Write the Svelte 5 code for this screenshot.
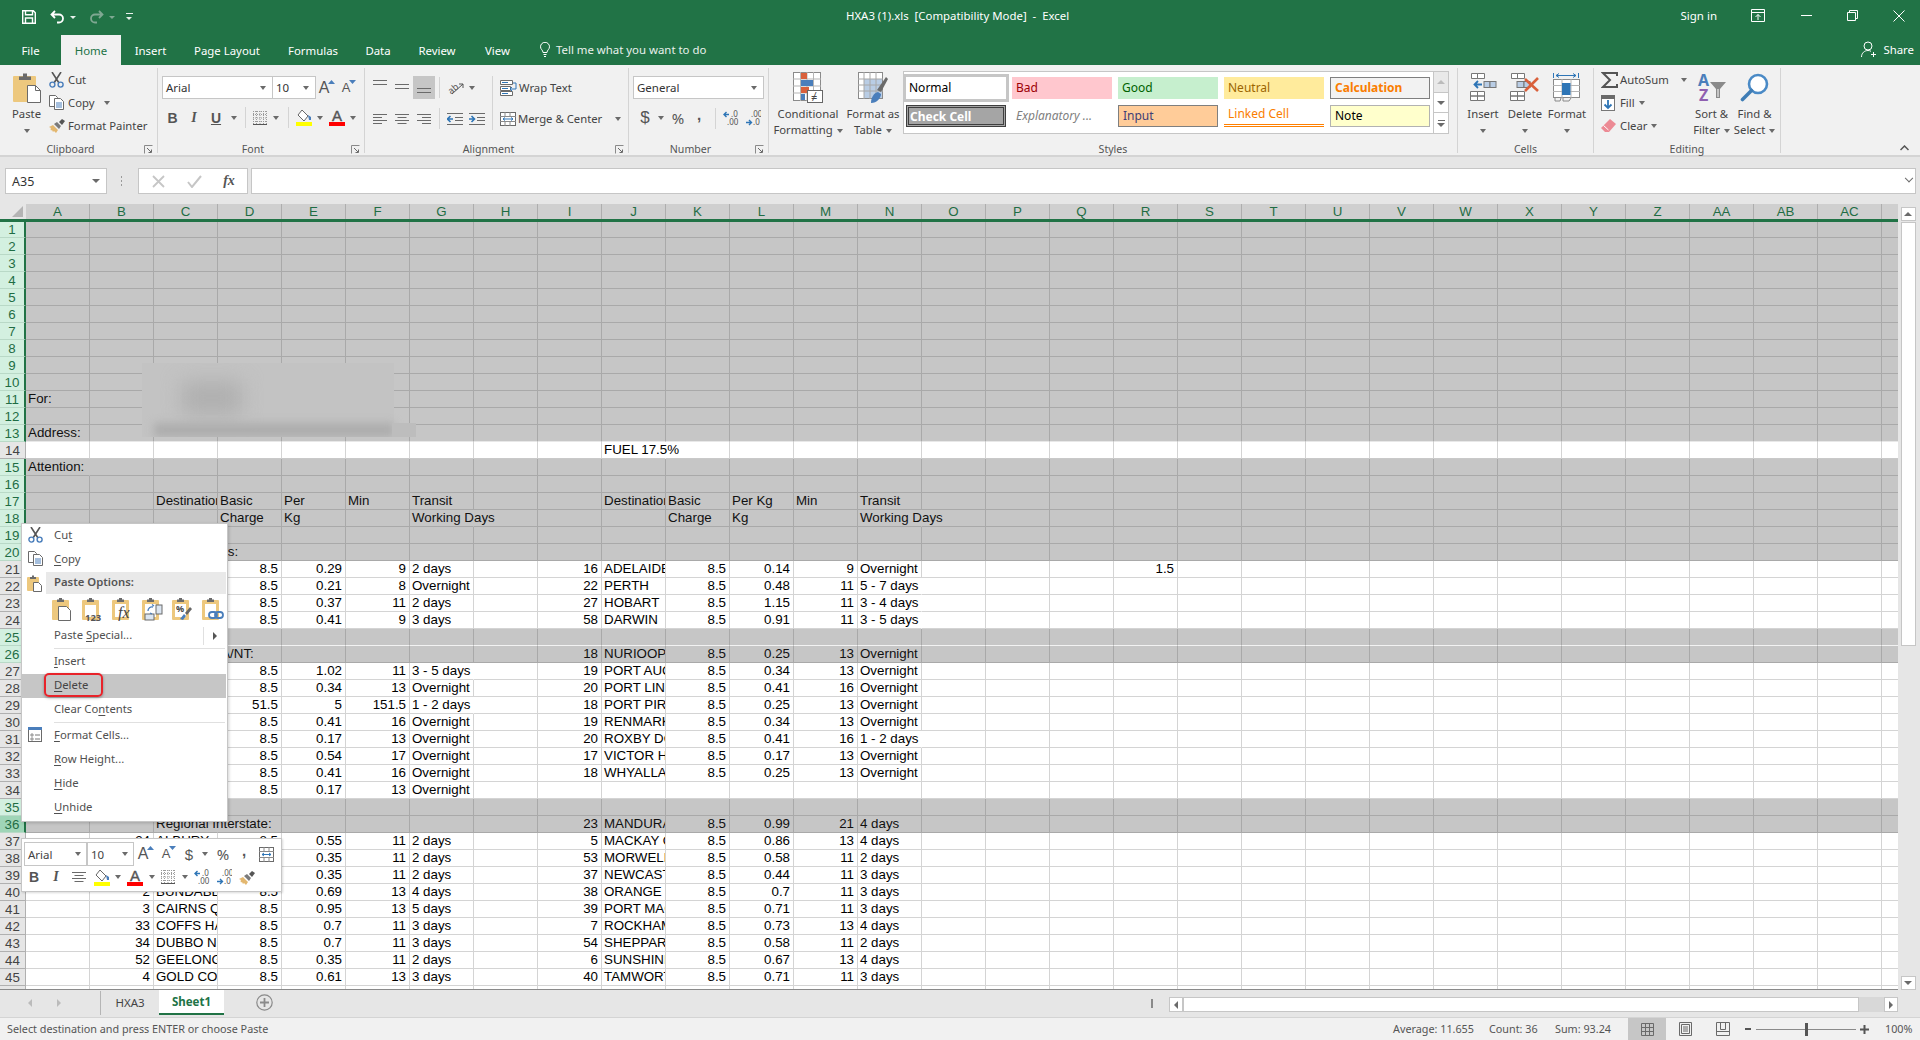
<script>
  const cols = [];
  for (let i = 0; i < 29; i++) {
    cols.push(i < 26 ? String.fromCharCode(65 + i) : 'A' + String.fromCharCode(65 + i - 26));
  }
  const line = (...v) => {
    const keys = ['B', 'C', 'D', 'E', 'F', 'G', 'I', 'J', 'K', 'L', 'M', 'N'];
    const o = {};
    keys.forEach((k, i) => { if (v[i] !== undefined && v[i] !== null) o[k] = v[i]; });
    return o;
  };
  const _ = null;
  const data = {
    11: { A: 'For:' }, 13: { A: 'Address:' }, 14: { J: 'FUEL 17.5%' }, 15: { A: 'Attention:' },
    17: { C: 'Destination', D: 'Basic', E: 'Per', F: 'Min', G: 'Transit', J: 'Destination', K: 'Basic', L: 'Per Kg', M: 'Min', N: 'Transit' },
    18: { D: 'Charge', E: 'Kg', G: 'Working Days', K: 'Charge', L: 'Kg', N: 'Working Days' },
    20: { C: 'Capital Cities:' },
    21: { ...line(_, _, 8.5, 0.29, 9, '2 days', 16, 'ADELAIDE', 8.5, 0.14, 9, 'Overnight'), R: 1.5 },
    22: line(_, _, 8.5, 0.21, 8, 'Overnight', 22, 'PERTH', 8.5, 0.48, 11, '5 - 7 days'),
    23: line(_, _, 8.5, 0.37, 11, '2 days', 27, 'HOBART', 8.5, 1.15, 11, '3 - 4 days'),
    24: line(_, _, 8.5, 0.41, 9, '3 days', 58, 'DARWIN', 8.5, 0.91, 11, '3 - 5 days'),
    26: line(_, 'Regional SA/NT:', _, _, _, _, 18, 'NURIOOPTA', 8.5, 0.25, 13, 'Overnight'),
    27: line(_, _, 8.5, 1.02, 11, '3 - 5 days', 19, 'PORT AUGUSTA', 8.5, 0.34, 13, 'Overnight'),
    28: line(_, _, 8.5, 0.34, 13, 'Overnight', 20, 'PORT LINCOLN', 8.5, 0.41, 16, 'Overnight'),
    29: line(_, _, 51.5, 5, 151.5, '1 - 2 days', 18, 'PORT PIRIE', 8.5, 0.25, 13, 'Overnight'),
    30: line(_, _, 8.5, 0.41, 16, 'Overnight', 19, 'RENMARK', 8.5, 0.34, 13, 'Overnight'),
    31: line(_, _, 8.5, 0.17, 13, 'Overnight', 20, 'ROXBY DOWNS', 8.5, 0.41, 16, '1 - 2 days'),
    32: line(_, _, 8.5, 0.54, 17, 'Overnight', 17, 'VICTOR HARBOR', 8.5, 0.17, 13, 'Overnight'),
    33: line(_, _, 8.5, 0.41, 16, 'Overnight', 18, 'WHYALLA', 8.5, 0.25, 13, 'Overnight'),
    34: line(_, _, 8.5, 0.17, 13, 'Overnight'),
    36: line(_, 'Regional Interstate:', _, _, _, _, 23, 'MANDURAH', 8.5, 0.99, 21, '4 days'),
    37: line(24, 'ALBURY', 8.5, 0.55, 11, '2 days', 5, 'MACKAY QLD', 8.5, 0.86, 13, '4 days'),
    38: line(43, 'BALLARAT', 8.5, 0.35, 11, '2 days', 53, 'MORWELL', 8.5, 0.58, 11, '2 days'),
    39: line(44, 'BENDIGO', 8.5, 0.35, 11, '2 days', 37, 'NEWCASTLE', 8.5, 0.44, 11, '3 days'),
    40: line(2, 'BUNDABERG', 8.5, 0.69, 13, '4 days', 38, 'ORANGE NSW', 8.5, 0.7, 11, '3 days'),
    41: line(3, 'CAIRNS QLD', 8.5, 0.95, 13, '5 days', 39, 'PORT MACQUARIE', 8.5, 0.71, 11, '3 days'),
    42: line(33, 'COFFS HARBOUR', 8.5, 0.7, 11, '3 days', 7, 'ROCKHAMPTON', 8.5, 0.73, 13, '4 days'),
    43: line(34, 'DUBBO NSW', 8.5, 0.7, 11, '3 days', 54, 'SHEPPARTON', 8.5, 0.58, 11, '2 days'),
    44: line(52, 'GEELONG VIC', 8.5, 0.35, 11, '2 days', 6, 'SUNSHINE COAST', 8.5, 0.67, 13, '4 days'),
    45: line(4, 'GOLD COAST', 8.5, 0.61, 13, '3 days', 40, 'TAMWORTH', 8.5, 0.71, 11, '3 days'),
    46: line(36, 'GOSFORD', 8.5, 0.44, 11, '2 days', 8, 'TOOWOOMBA', 8.5, 0.67, 13, '4 days')
  };
  const selected = new Set([1, 2, 3, 4, 5, 6, 7, 8, 9, 10, 11, 12, 13, 15, 16, 17, 18, 19, 20, 25, 26, 35, 36]);
  const rows = [];
  for (let n = 1; n <= 46; n++) {
    const d = data[n] || {};
    rows.push({
      n,
      sel: selected.has(n),
      active: n === 36,
      cells: cols.map((c, i) => {
        const v = d[c];
        const next = d[cols[i + 1]];
        const isText = typeof v === 'string';
        const width = isText ? v.length * 6.4 : 0;
        const spills = isText && next === undefined && width > 62;
        return { v, num: typeof v === 'number', clip: isText && next !== undefined, spills };
      })
    });
  }
  const menuA = [
    { t: ['Cu', 't', ''], icon: 'cut' },
    { t: ['', 'C', 'opy'], icon: 'copy' }
  ];
  const menuB = [
    { t: ['', 'I', 'nsert'] },
    { t: ['', 'D', 'elete'], hot: true },
    { t: ['Clear Co', 'n', 'tents'] }
  ];
  const menuC = [
    { t: ['', 'F', 'ormat Cells...'], icon: 'format' },
    { t: ['', 'R', 'ow Height...'] },
    { t: ['', 'H', 'ide'] },
    { t: ['', 'U', 'nhide'] }
  ];
  const pasteKinds = ['doc', '123', 'fx', 'swap', 'pct', 'link'];
  const tabs = ['File', 'Home', 'Insert', 'Page Layout', 'Formulas', 'Data', 'Review', 'View'];
</script>

{#snippet caret()}<span class="caret"></span>{/snippet}

{#snippet launcher()}
  <svg class="launcher" width="9" height="9" viewBox="0 0 9 9"><path d="M.5 8.5v-8h8" fill="none" stroke="#8a8a8a"/><path d="M3 3l4 4M4.5 7.5h3v-3" fill="none" stroke="#6a6a6a"/></svg>
{/snippet}

{#snippet cutIcon()}
  <svg width="15" height="16" viewBox="0 0 15 16"><path d="M3 0l7 11M12 0L5 11" stroke="#555" stroke-width="1.6" fill="none"/><circle cx="3.4" cy="12.6" r="2.5" fill="none" stroke="#4a7ebb" stroke-width="1.4"/><circle cx="11.6" cy="12.6" r="2.5" fill="none" stroke="#4a7ebb" stroke-width="1.4"/></svg>
{/snippet}
{#snippet copyIcon()}
  <svg width="15" height="15" viewBox="0 0 15 15"><path d="M.5.5h6l2 2v9h-8z" fill="#fff" stroke="#6a6a6a"/><path d="M5.5 3.5h6l3 3v8h-9z" fill="#fff" stroke="#6a6a6a"/><path d="M7 8h6M7 10h6M7 12h6" stroke="#4a7ebb"/></svg>
{/snippet}
{#snippet brushIcon()}
  <svg width="17" height="15" viewBox="0 0 17 15"><path d="M0 9l4-2 5 5-2 3-2-2-1 1-1-2-1 .5-.5-1.5L2 10z" fill="#e3b76f"/><path d="M5 6l5 5 2-3-4-4z" fill="#7a7a7a"/><path d="M10 4l3-3 3 2-3 4z" fill="#555"/></svg>
{/snippet}
{#snippet clip(kind)}
  <svg width="22" height="24" viewBox="0 0 22 24">
    <rect x="0" y="3" width="17" height="20" rx="1" fill="#edc87e"/>
    <path d="M5 5V2.500h2V1h3v1.500h2V5z" fill="#6a6a6a"/>
    {#if kind === 'doc'}
      <path d="M6.500 9.500h8l4 4v10h-12z" fill="#fff" stroke="#6a6a6a"/>
    {:else if kind === '123'}
      <rect x="3" y="8" width="11" height="12" fill="#fff"/><text x="3" y="23.500" font-size="9.500" font-weight="700" fill="#555" font-family="Noto Sans">123</text>
    {:else if kind === 'fx'}
      <rect x="3" y="7" width="11" height="13" fill="#fff"/><text x="6" y="21" font-size="16" font-style="italic" fill="#444" font-family="Liberation Serif">fx</text>
    {:else if kind === 'swap'}
      <rect x="3" y="7" width="11" height="13" fill="#fff"/><rect x="14" y="8" width="6" height="9" fill="#dce6f1" stroke="#6a6a6a"/><rect x="3" y="17" width="9" height="6" fill="#dce6f1" stroke="#6a6a6a"/><path d="M6 14a4 4 0 0 1 5-4M12 9l-2-1.500M8 16l2 1" stroke="#4a7ebb" fill="none" stroke-width="1.300"/>
    {:else if kind === 'pct'}
      <rect x="3" y="7" width="11" height="13" fill="#fff"/><text x="4" y="15" font-size="9" font-weight="700" fill="#444" font-family="Noto Sans">%</text><path d="M8 22l4-5 2 2-3 4z" fill="#4a7ebb"/><path d="M13 16l5-6 2 2-5 6z" fill="#666"/>
    {:else}
      <rect x="3" y="7" width="11" height="13" fill="#fff"/><rect x="7" y="15" width="8" height="6" rx="3" fill="none" stroke="#4a7ebb" stroke-width="1.800"/><rect x="13" y="15" width="8" height="6" rx="3" fill="none" stroke="#4a7ebb" stroke-width="1.800"/>
    {/if}
  </svg>
{/snippet}
{#snippet lines(kind)}
  <svg width="14" height="10" viewBox="0 0 14 10"><path d={kind === 'l' ? 'M0 .5h14M0 3.500h9M0 6.500h14M0 9.500h9' : kind === 'c' ? 'M0 .5h14M2.500 3.500h9M0 6.500h14M2.500 9.500h9' : kind === 'r' ? 'M0 .5h14M5 3.500h9M0 6.500h14M5 9.500h9' : 'M0 1.500h14M0 5.500h14'} stroke="#6a6a6a"/></svg>
{/snippet}
{#snippet borders()}
  <svg width="14" height="14" viewBox="0 0 14 14"><path d="M.5 0v13M3.500 0v13M7 0v13M10.500 0v13M13.500 0v13M0 .5h14M0 3.500h14M0 7h14M0 10.500h14" stroke="#9a9a9a" stroke-dasharray="1 1" fill="none"/><path d="M0 13.500h14" stroke="#555"/></svg>
{/snippet}
{#snippet fillIcon()}
  <svg width="17" height="17" viewBox="0 0 17 17"><path d="M6 1l6 6-4 5-6-6z" fill="#fff" stroke="#666"/><path d="M12 6l3 2v3h-2z" fill="#4a7ebb"/><rect x="0" y="13" width="16" height="4" fill="#ffff00"/></svg>
{/snippet}
{#snippet fontColor()}
  <span class="fcolor"><b>A</b><i></i></span>
{/snippet}
{#snippet incDec(up)}
  <svg width="16" height="16" viewBox="0 0 16 16">
    <path d={up ? 'M1 4.500h5M3.500 2L1 4.500 3.500 7' : 'M1 12.500h5M4 10l2.500 2.500L4 15'} fill="none" stroke="#2e75b6" stroke-width="1.400"/>
    <text x={up ? 8 : 6} y="7" font-size="8" font-family="Noto Sans" fill="#555">{up ? '.0' : '.00'}</text>
    <text x={up ? 4 : 8} y="15" font-size="8" font-family="Noto Sans" fill="#555">{up ? '.00' : '.0'}</text>
  </svg>
{/snippet}
{#snippet growA(up)}
  <span class="growa" class:small={!up}>A<svg width="7" height="4" viewBox="0 0 7 4"><path d={up ? 'M0 4l3.500-4L7 4z' : 'M0 0h7L3.500 4z'} fill="#4a7ebb"/></svg></span>
{/snippet}
{#snippet wrapTable()}
  <svg width="16" height="16" viewBox="0 0 16 16"><rect x=".5" y="1.500" width="15" height="13" fill="#fff" stroke="#6a6a6a"/><path d="M0 5.500h16M0 10.500h16M5 1v4M10 1v4M5 11v4M10 11v4" stroke="#8a8a8a"/><path d="M3 8h10M3 8l2-1.500M3 8l2 1.500M13 8l-2-1.500M13 8l-2 1.500" stroke="#2e75b6" fill="none"/></svg>
{/snippet}

<div class="app">
  <header class="titlebar">
    <div class="qat">
      <svg class="save" width="14" height="14" viewBox="0 0 14 14"><path d="M.7.7h10.600l2 2v10.600H.7z M3.500.7v4h7v-4M3.500 13.300V8h7v5.300" fill="none" stroke="#fff" stroke-width="1.400"/></svg>
      <svg class="undo" width="15" height="14" viewBox="0 0 15 14"><path d="M5 1L1.500 4.500 5 8M1.500 4.500H9a4 4 0 0 1 0 8H7" fill="none" stroke="#fff" stroke-width="1.800"/></svg>
      <span class="tcaret"></span>
      <svg class="redo" width="15" height="14" viewBox="0 0 15 14"><path d="M10 1l3.500 3.500L10 8M13.500 4.500H6a4 4 0 0 0 0 8h2" fill="none" stroke="#7fa892" stroke-width="1.800"/></svg>
      <span class="tcaret dim"></span>
      <span class="custom"></span>
    </div>
    <div class="doc">HXA3 (1).xls &nbsp;[Compatibility Mode] &nbsp;-&nbsp; Excel</div>
    <div class="winbtns">
      <span class="signin">Sign in</span>
      <svg class="rd" width="14" height="13" viewBox="0 0 14 13"><path d="M.5.5h13v12H.5zM.5 3.500h13M7 11V5.500M4.500 8L7 5.500 9.500 8" fill="none" stroke="#fff"/></svg>
      <svg class="mn" width="11" height="11" viewBox="0 0 11 11"><path d="M0 5.500h11" stroke="#fff"/></svg>
      <svg class="mx" width="11" height="11" viewBox="0 0 11 11"><path d="M.5 2.500h8v8h-8zM2.500 2.500v-2h8v8h-2" fill="none" stroke="#fff"/></svg>
      <svg class="cl" width="12" height="12" viewBox="0 0 12 12"><path d="M.5.5l11 11M11.500.5l-11 11" stroke="#fff"/></svg>
    </div>
  </header>

  <nav class="tabs">
    {#each tabs as t, i}
      <div class="tab t{i}" class:on={t === 'Home'}>{t}</div>
    {/each}
    <span></span>
    <svg class="bulb" width="10" height="15" viewBox="0 0 10 15"><path d="M3 10.500C3 8 .5 7.500.5 4.800a4.500 4.500 0 0 1 9 0C9.500 7.500 7 8 7 10.500zM3.500 12.500h3M4 14.500h2" fill="none" stroke="#fff"/></svg>
    <span class="tell">Tell me what you want to do</span>
    <span class="share">
      <svg width="16" height="17" viewBox="0 0 16 17"><circle cx="7" cy="5" r="4" fill="none" stroke="#fff"/><path d="M.5 16c0-4 3-6.500 6.500-6.500 1.200 0 2 .2 3 .8M12.500 11v5M10 13.500h5" fill="none" stroke="#fff"/></svg>
      Share
    </span>
  </nav>

  <section class="ribbon">
    <div class="group g1">
      <div class="body clipb">
        <div class="pastecol">
          <svg width="28" height="30" viewBox="0 0 28 30"><rect x="0" y="3" width="23" height="26" rx="1" fill="#edc87e"/><path d="M6 7V3.500h4V.5h4v3h4V7z" fill="#6a6a6a"/><path d="M14.500 12.500h8l5 5v12h-13z" fill="#fff" stroke="#6a6a6a"/><path d="M22.500 12.500v5h5" fill="none" stroke="#6a6a6a"/></svg>
          <span class="btxt">Paste</span>
          {@render caret()}
        </div>
        <div class="stack">
          <div class="sitem"><span class="sico">{@render cutIcon()}</span>Cut</div>
          <div class="sitem"><span class="sico">{@render copyIcon()}</span>Copy<span class="copycaret">{@render caret()}</span></div>
          <div class="sitem"><span class="sico">{@render brushIcon()}</span>Format Painter</div>
        </div>
      </div>
      <div class="glabel lab">Clipboard{@render launcher()}</div>
    </div>

    <div class="group g2">
      <div class="body fontg">
        <div class="frow1">
          <div class="combo fname">Arial{@render caret()}</div>
          <div class="combo fsize">10{@render caret()}</div>
          <span class="cc">{@render growA(true)}</span>
          <span class="cc">{@render growA(false)}</span>
        </div>
        <div class="frow2">
          <b class="ch bold">B</b>
          <i class="ch ital">I</i>
          <u class="ch bold">U</u>
          <span class="cc">{@render caret()}</span>
          <span class="vsep"></span>
          <span class="cc">{@render borders()}</span>
          <span class="cc">{@render caret()}</span>
          <span class="vsep"></span>
          <span class="cc">{@render fillIcon()}</span>
          <span class="cc">{@render caret()}</span>
          <span class="cc">{@render fontColor()}</span>
          <span class="cc">{@render caret()}</span>
        </div>
      </div>
      <div class="glabel lab">Font{@render launcher()}</div>
    </div>

    <div class="group g3">
      <div class="body aligng">
        <div class="agrid">
          <span class="cc top">{@render lines('t')}</span>
          <span class="cc">{@render lines('t')}</span>
          <span class="cc tile">{@render lines('b')}</span>
          <span class="vsep"></span>
          <span class="orient">
            <svg width="18" height="14" viewBox="0 0 18 14"><text x="1" y="11" font-size="9" font-family="Noto Sans" fill="#555" transform="rotate(-40 6 8)">ab</text><path d="M5 13L16 3M16 3h-4M16 3v4" stroke="#555" fill="none"/></svg>
            {@render caret()}
          </span>
          <span class="cc">{@render lines('l')}</span>
          <span class="cc">{@render lines('c')}</span>
          <span class="cc">{@render lines('r')}</span>
          <span class="vsep"></span>
          <span class="cc">
            <svg width="16" height="12" viewBox="0 0 16 12"><path d="M0 .5h16M8 4.500h8M8 7.500h8M0 11.500h16" stroke="#6a6a6a"/><path d="M0 6h6M3.500 3L.5 6l3 3" stroke="#2e75b6" stroke-width="1.600" fill="none"/></svg>
          </span>
          <span class="cc">
            <svg width="16" height="12" viewBox="0 0 16 12"><path d="M0 .5h16M8 4.500h8M8 7.500h8M0 11.500h16" stroke="#6a6a6a"/><path d="M6 6H0M2.500 3l3 3-3 3" stroke="#2e75b6" stroke-width="1.600" fill="none"/></svg>
          </span>
        </div>
        <span class="bigsep"></span>
        <div class="wrapcol">
          <div class="wrow">
            <svg width="17" height="16" viewBox="0 0 17 16"><path d="M.5.5h12v4H.5zM.5 6.500h10v4H.5zM.5 11.500h12v4H.5z" fill="#fff" stroke="#6a6a6a"/><path d="M2 2.500h6M2 8.500h6M2 13.500h6" stroke="#2e75b6"/><path d="M13 3h3v6h-6M12 7l-2 2 2 2" fill="none" stroke="#2e75b6"/></svg>
            <span>Wrap Text</span>
          </div>
          <div class="wrow">
            {@render wrapTable()}
            <span class="mtext">Merge &amp; Center</span>
            {@render caret()}
          </div>
        </div>
      </div>
      <div class="glabel lab">Alignment{@render launcher()}</div>
    </div>

    <div class="group g4">
      <div class="body numg">
        <div class="combo gen">General{@render caret()}</div>
        <div class="nrow">
          <span class="cc dollar">$</span>
          <span class="cc">{@render caret()}</span>
          <span class="cc pct">%</span>
          <span class="cc comma">,</span>
          <span class="cc"><span class="vsep"></span></span>
          <span class="cc">{@render incDec(true)}</span>
          <span></span>
          <span class="cc">{@render incDec(false)}</span>
        </div>
      </div>
      <div class="glabel lab">Number{@render launcher()}</div>
    </div>

    <div class="group g5">
      <div class="body stylesg">
        <div class="big b-cf">
          <span class="bico">
            <svg width="30" height="31" viewBox="0 0 30 31">
              <rect x=".5" y=".5" width="27" height="28" fill="#fff" stroke="#8a8a8a"/>
              <path d="M7.500 0v29M20.500 0v29M0 7h28M0 14h28M0 21h28M14 0v29" stroke="#b5b5b5"/>
              <rect x="8" y="1" width="6" height="6" fill="#d9603b"/><rect x="8" y="8" width="12" height="6" fill="#4a7ebb"/><rect x="8" y="15" width="8" height="6" fill="#d9603b"/><rect x="8" y="22" width="4" height="6" fill="#4a7ebb"/>
              <rect x="14.500" y="18.500" width="15" height="12" fill="#fff" stroke="#666"/>
              <text x="18" y="28.500" font-size="11" fill="#444" font-family="Noto Sans">≠</text>
            </svg>
          </span>
          <span class="btxt">Conditional</span>
          <span class="btxt">Formatting {@render caret()}</span>
        </div>
        <div class="big b-ft">
          <span class="bico">
            <svg width="30" height="31" viewBox="0 0 30 31">
              <rect x=".5" y=".5" width="24" height="26" fill="#fff" stroke="#8a8a8a"/>
              <rect x="6" y="7" width="18" height="19" fill="#b9cde5"/>
              <path d="M6 0v27M12 0v27M18 0v27M0 7h25M0 13h25M0 19h25" stroke="#a8a8a8"/>
              <path d="M19 18L28 5l2 2-7 13z" fill="#6a6a6a"/><path d="M13 31c0-6 3-10 7-11l3 2c0 4-4 9-10 9z" fill="#4a7ebb"/>
            </svg>
          </span>
          <span class="btxt">Format as</span>
          <span class="btxt">Table {@render caret()}</span>
        </div>
        <div class="gallery">
          <div class="sgrid">
            <div class="st normal">Normal</div>
            <div class="st bad">Bad</div>
            <div class="st good">Good</div>
            <div class="st neutral">Neutral</div>
            <div class="st calc">Calculation</div>
            <div class="st check">Check Cell</div>
            <div class="st expl">Explanatory ...</div>
            <div class="st input">Input</div>
            <div class="st linked">Linked Cell</div>
            <div class="st note">Note</div>
          </div>
          <div class="gscroll">
            <span class="gb disabled"><i class="upc"></i></span>
            <span class="gb"><i class="dnc"></i></span>
            <span class="gb more"><em></em><i class="dnc"></i></span>
          </div>
        </div>
      </div>
      <div class="glabel">Styles</div>
    </div>

    <div class="group g6">
      <div class="body cellsg">
        <div class="big w42">
          <span class="bico">
            <svg width="27" height="28" viewBox="0 0 27 28"><path d="M1.500.5h6v5h-6zM7.500.5h7v5h-7zM.5 18.500h7v4.500h-7zM7.500 18.500h7v4.500h-7zM.5 23h7v4.500h-7zM7.500 23h7v4.500h-7z" fill="#fff" stroke="#777"/><rect x="14" y="8.500" width="6" height="6" fill="#b9cde5" stroke="#777"/><rect x="20" y="8.500" width="6" height="6" fill="#b9cde5" stroke="#777"/><path d="M5 11.500h7M8 8L4.500 11.500 8 15" fill="none" stroke="#2e75b6" stroke-width="1.800"/></svg>
          </span>
          <span class="btxt">Insert</span>
          {@render caret()}
        </div>
        <div class="big w42">
          <span class="bico">
            <svg width="30" height="28" viewBox="0 0 30 28"><path d="M1.500.5h6v5h-6zM7.500.5h7v5h-7zM.5 18.500h7v4.500h-7zM7.500 18.500h7v4.500h-7zM.5 23h7v4.500h-7zM7.500 23h7v4.500h-7z" fill="#fff" stroke="#777"/><rect x="7" y="8.500" width="7" height="6" fill="#b9cde5" stroke="#777"/><rect x="14" y="8.500" width="6" height="6" fill="#b9cde5" stroke="#777"/><path d="M15 6l13 12M28 5L15 18" stroke="#d9603b" stroke-width="2.600"/></svg>
          </span>
          <span class="btxt">Delete</span>
          {@render caret()}
        </div>
        <div class="big w42">
          <span class="bico">
            <svg width="28" height="30" viewBox="0 0 28 30"><path d="M.5 1v5M25.500 1v5M3 3.500h20M3 3.500l3-2M3 3.500l3 2M23 3.500l-3-2M23 3.500l-3 2" fill="none" stroke="#2e75b6"/><rect x=".5" y="7.500" width="26" height="18" fill="#fff" stroke="#8a8a8a"/><path d="M9 7v19M18 7v19M0 13.500h27M0 19.500h27" stroke="#b5b5b5"/><rect x="9" y="11" width="8.500" height="12" fill="#2e75b6"/><path d="M2 26v3h5l1-3M10 26v3h6l2-3" fill="none" stroke="#8a8a8a"/></svg>
          </span>
          <span class="btxt">Format</span>
          {@render caret()}
        </div>
      </div>
      <div class="glabel">Cells</div>
    </div>

    <div class="group g7">
      <div class="body editg">
        <div class="estack">
          <div class="sitem"><span class="sico">
            <svg width="17" height="16" viewBox="0 0 17 16"><path d="M16 4V1H2l7 7-7 7h14v-3" fill="none" stroke="#555" stroke-width="2"/></svg>
          </span>AutoSum<span class="ascaret">{@render caret()}</span></div>
          <div class="sitem"><span class="sico">
            <svg width="14" height="16" viewBox="0 0 14 16"><rect x=".5" y=".5" width="13" height="15" fill="#fff" stroke="#777"/><rect x="0" y="0" width="14" height="4" fill="#6a6a6a"/><path d="M7 5v8M3.500 9.500L7 13l3.500-3.500" fill="none" stroke="#2e75b6" stroke-width="1.800"/></svg>
          </span>Fill <span class="mini">{@render caret()}</span></div>
          <div class="sitem"><span class="sico">
            <svg width="15" height="14" viewBox="0 0 15 14"><path d="M9 0l6 5-7 8H4L0 9z" fill="#ec8a94"/><path d="M2.500 6.500l5 4.500" stroke="#fff"/></svg>
          </span>Clear <span class="mini">{@render caret()}</span></div>
        </div>
        <div class="big w43">
          <span class="bico">
            <svg width="30" height="29" viewBox="0 0 30 29"><text x="1" y="13" font-size="16" font-weight="700" font-family="Noto Sans" fill="#4a7ebb">A</text><text x="2" y="28" font-size="16" font-weight="700" font-family="Noto Sans" fill="#8f5fb0">Z</text><path d="M13 9h16l-6 7v9h-4v-9z" fill="#8a8a8a"/><path d="M21 16v8" stroke="#fff"/></svg>
          </span>
          <span class="btxt">Sort &amp;</span>
          <span class="btxt">Filter {@render caret()}</span>
        </div>
        <div class="big w43">
          <span class="bico">
            <svg width="29" height="29" viewBox="0 0 29 29"><circle cx="18" cy="11" r="9" fill="#fff" stroke="#4a8ac6" stroke-width="2.600"/><path d="M11.500 17.500L2.500 26.500" stroke="#3f7db5" stroke-width="3.600" stroke-linecap="round"/></svg>
          </span>
          <span class="btxt">Find &amp;</span>
          <span class="btxt">Select {@render caret()}</span>
        </div>
      </div>
      <div class="glabel">Editing</div>
    </div>
    <div class="collapse">
      <svg width="9" height="6" viewBox="0 0 9 6"><path d="M.5 5l4-4 4 4" fill="none" stroke="#555" stroke-width="1.500"/></svg>
    </div>
  </section>

  <section class="fbar">
    <div class="namebox">A35<span class="nbcaret"></span></div>
    <div class="grip"></div>
    <div class="fxbox">
      <svg width="13" height="13" viewBox="0 0 13 13"><path d="M1 1l11 11M12 1L1 12" stroke="#c6c6c6" stroke-width="1.800"/></svg>
      <svg width="15" height="13" viewBox="0 0 15 13"><path d="M1 7l4 5L14 1" fill="none" stroke="#c6c6c6" stroke-width="2"/></svg>
      <span class="fx">fx</span>
    </div>
    <div class="finput"><span class="fcaret"></span></div>
  </section>

  <section class="sheet">
    <div class="gridpane">
      <div class="colhead">
        <div class="corner"><svg width="11" height="11" viewBox="0 0 11 11"><path d="M11 0v11H0z" fill="#b4b4b4"/></svg></div>
        {#each cols as c}<div class="ch-cell">{c}</div>{/each}
        <div class="ch-cell stub"></div>
      </div>
      <div class="gridrows">
        {#each rows as r}
          <div class="grow" class:sel={r.sel} class:e14={r.n === 13 || r.n === 14} class:e25={r.n === 25}>
            <div class="rh" class:rsel={r.sel} class:active={r.active}>{r.n}</div>
            {#each r.cells as c}
              <div class="cell" class:num={c.num} class:clip={c.clip} class:spill={c.spills}>{c.v ?? ''}</div>
            {/each}
            <div class="cell stub"></div>
          </div>
        {/each}
      </div>
    </div>
    <aside class="vs">
      <span class="sbtn"><i class="upc"></i></span>
      <div class="vtrack"><div class="vthumb"></div></div>
      <span class="sbtn"><i class="dnc"></i></span>
    </aside>
  </section>

  <section class="tabbar">
    <span class="nav"><i class="lc"></i></span>
    <span class="nav"><i class="rc"></i></span>
    <span class="tsep"></span>
    <span class="stab">HXA3</span>
    <span class="stab cur">Sheet1</span>
    <span class="addsheet"><svg width="17" height="17" viewBox="0 0 17 17"><circle cx="8.500" cy="8.500" r="7.700" fill="none" stroke="#8a8a8a" stroke-width="1.200"/><path d="M8.500 4v9M4 8.500h9" stroke="#8a8a8a" stroke-width="1.800"/></svg></span>
    <span class="dots"></span>
    <div class="hs">
      <span class="hbtn"><i class="lc"></i></span>
      <div class="hthumb"></div>
      <div class="htrack"></div>
      <span class="hbtn"><i class="rc"></i></span>
    </div>
  </section>

  <footer class="status">
    <span class="msg">Select destination and press ENTER or choose Paste</span>
    <span class="stat s-a">Average: 11.655</span>
    <span class="stat s-c">Count: 36</span>
    <span class="stat s-s">Sum: 93.24</span>
    <span class="vw on"><svg width="13" height="13" viewBox="0 0 13 13"><path d="M.5.5h12v12H.5zM4.500 0v13M8.500 0v13M0 4.500h13M0 8.500h13" fill="none" stroke="#6a6a6a"/></svg></span>
    <span class="vw"><svg width="13" height="14" viewBox="0 0 13 14"><path d="M.5.5h12v13H.5zM2.500 2.500h8v9h-8zM4 5h5M4 7h5M4 9h5" fill="none" stroke="#6a6a6a"/></svg></span>
    <span class="vw"><svg width="14" height="14" viewBox="0 0 14 14"><path d="M.5.5h13v13H.5zM4.500.5v7h5v-7M.5 9.500h13" fill="none" stroke="#6a6a6a"/></svg></span>
    <span class="zminus"></span>
    <div class="slider"><span class="knob"></span></div>
    <svg class="zplus" width="9" height="9" viewBox="0 0 9 9"><path d="M4.500 0v9M0 4.500h9" stroke="#555" stroke-width="2"/></svg>
    <span class="pcent">100%</span>
  </footer>

  <div class="blurpatch">
    <div class="b1"></div><div class="b2"></div><div class="b3"></div><div class="b4"></div>
  </div>

  <div class="ctx">
    {#each menuA as m}
      <div class="mi">
        <span class="mico">{#if m.icon === 'cut'}{@render cutIcon()}{:else}{@render copyIcon()}{/if}</span>
        <span>{m.t[0]}<u>{m.t[1]}</u>{m.t[2]}</span>
      </div>
    {/each}
    <div class="mhead">
      <span class="mico phead"><svg width="16" height="17" viewBox="0 0 16 17"><rect y="2" width="12" height="14" rx="1" fill="#edc87e"/><path d="M3 4V2h2V.5h2V2h2v2z" fill="#6a6a6a"/><path d="M6.500 7.500h5l3 3v6h-8z" fill="#fff" stroke="#6a6a6a"/></svg></span>
      <b>Paste Options:</b>
    </div>
    <div class="pastes">
      {#each pasteKinds as k}<span class="pk">{@render clip(k)}</span>{/each}
    </div>
    <div class="mi">
      <span class="mico"></span>
      <span>Paste <u>S</u>pecial...</span>
      <span class="submenu"><i class="rc"></i></span>
    </div>
    <div class="msep"></div>
    {#each menuB as m}
      <div class="mi" class:hotrow={m.hot}>
        <span class="mico"></span>
        <span>{m.t[0]}<u>{m.t[1]}</u>{m.t[2]}</span>
        {#if m.hot}<span class="redring"></span>{/if}
      </div>
    {/each}
    <div class="msep"></div>
    {#each menuC as m}
      <div class="mi">
        <span class="mico">{#if m.icon}<svg width="14" height="15" viewBox="0 0 14 15"><rect x=".5" y=".5" width="13" height="14" fill="#fff" stroke="#6a6a6a"/><rect width="14" height="3" fill="#4a7ebb"/><path d="M3 7h2v2H3zM3 11h2v2H3z" fill="none" stroke="#777" stroke-width=".8"/><path d="M7 8h5M7 12h5" stroke="#777"/></svg>{/if}</span>
        <span>{m.t[0]}<u>{m.t[1]}</u>{m.t[2]}</span>
      </div>
    {/each}
  </div>

  <div class="minibar">
    <div class="m1">
      <div class="mcombo mfn">Arial{@render caret()}</div>
      <div class="mcombo mfs">10{@render caret()}</div>
      <span class="cc">{@render growA(true)}</span>
      <span class="cc">{@render growA(false)}</span>
      <span class="cc dollar md">$</span>
      <span class="cc">{@render caret()}</span>
      <span class="cc pct md">%</span>
      <span class="cc comma">,</span>
      <span class="cc">
        <svg width="15" height="15" viewBox="0 0 15 15"><rect x=".5" y=".5" width="14" height="14" fill="#fff" stroke="#6a6a6a"/><path d="M0 4.500h15M0 10.500h15M5 0v4M10 0v4M5 11v4M10 11v4" stroke="#8a8a8a"/><path d="M3 7.500h9M3 7.500l2-1.500M3 7.500l2 1.500M12 7.500l-2-1.500M12 7.500l-2 1.500" stroke="#2e75b6" fill="none"/></svg>
      </span>
    </div>
    <div class="m2">
      <b class="ch bold">B</b>
      <i class="ch ital">I</i>
      <span class="cc">{@render lines('c')}</span>
      <span class="cc">{@render fillIcon()}</span>
      <span class="cc">{@render caret()}</span>
      <span class="cc">{@render fontColor()}</span>
      <span class="cc">{@render caret()}</span>
      <span class="cc">{@render borders()}</span>
      <span class="cc">{@render caret()}</span>
      <span class="cc">{@render incDec(true)}</span>
      <span class="cc">{@render incDec(false)}</span>
      <span class="cc">{@render brushIcon()}</span>
    </div>
  </div>
</div>

<style>
  :global(body) { margin: 0; overflow: hidden; background: #e6e6e6; }
  .app {
    position: relative;
    width: 1920px;
    height: 1040px;
    overflow: hidden;
    display: flex;
    flex-direction: column;
    font-family: "Noto Sans", "Open Sans", sans-serif;
    font-size: 11.3px;
    color: #444;
    background: #e6e6e6;
  }
  svg { display: block; flex: none; }
  .cc { display: flex; align-items: center; justify-content: center; }
  .caret {
    display: inline-block;
    width: 0; height: 0;
    border-left: 3.500px solid transparent;
    border-right: 3.500px solid transparent;
    border-top: 4px solid #6a6a6a;
    vertical-align: middle;
  }

  /* title */
  .titlebar {
    height: 35px;
    background: #217346;
    color: #fff;
    display: grid;
    grid-template-columns: 846px 1fr auto;
    align-items: center;
    flex: none;
  }
  .qat { display: flex; align-items: center; padding-left: 22px; margin-top: -1px; }
  .undo { margin-left: 14px; }
  .redo { margin-left: 13px; }
  .tcaret { width: 0; height: 0; border-left: 3px solid transparent; border-right: 3px solid transparent; border-top: 3.500px solid #e8f1ec; margin-left: 5px; }
  .tcaret.dim { border-top-color: #7fa892; margin-left: 5px; }
  .custom { width: 7px; height: 7px; margin-left: 11px; border-top: 1px solid #e8f1ec; position: relative; }
  .custom::after { content: ""; position: absolute; top: 3px; left: 0; border-left: 3.500px solid transparent; border-right: 3.500px solid transparent; border-top: 3.500px solid #e8f1ec; }
  .doc { font-size: 11.4px; margin-top: -4px; white-space: nowrap; }
  .winbtns { display: flex; align-items: center; margin-top: -4px; padding-right: 15px; }
  .signin { font-size: 11.5px; margin-right: 34px; }
  .mn { margin-left: 36px; }
  .mx { margin-left: 35px; }
  .cl { margin-left: 35px; }

  /* tabs */
  .tabs {
    height: 30px;
    background: #217346;
    color: #fff;
    display: grid;
    grid-template-columns: 61px 60px 59px 94px 78px 52px 66px 55px 15px 10px auto 1fr;
    align-items: stretch;
    flex: none;
    font-size: 11.4px;
  }
  .tab { display: flex; align-items: center; justify-content: center; padding-top: 0; }
  .tab.on { background: #f1f1f1; color: #217346; }
  .bulb { align-self: center; margin-top: -1px; }
  .tell { align-self: center; padding-left: 6px; color: #e9f1ec; margin-top: -1px; }
  .share { align-self: center; justify-self: end; display: flex; align-items: center; gap: 6px; padding-right: 6px; margin-top: -2px; }

  /* ribbon */
  .ribbon {
    height: 92px;
    flex: none;
    background: #f1f1f1;
    display: flex;
    box-sizing: border-box;
    border-bottom: 2px solid #d4d4d4;
    position: relative;
  }
  .group {
    margin-top: 3px;
    height: 85px;
    box-sizing: border-box;
    border-right: 1px solid #d4d4d4;
    display: flex;
    flex-direction: column;
    flex: none;
  }
  .body { height: 69px; flex: none; }
  .glabel { position: relative; height: 16px; line-height: 24px; text-align: center; font-size: 10.6px; color: #555; }
  .glabel.lab { padding-right: 16px; box-sizing: border-box; }
  .launcher { position: absolute; right: 4px; top: 8px; }
  .g1 { width: 158px; }
  .g2 { width: 207px; }
  .g3 { width: 264px; }
  .g4 { width: 140px; }
  .g5 { width: 689px; }
  .g6 { width: 136px; }
  .g7 { width: 187px; }
  .btxt { line-height: 16px; white-space: nowrap; height: 16px; }

  .clipb { display: flex; }
  .pastecol { width: 50px; display: flex; flex-direction: column; align-items: center; padding: 5px 0 0 3px; box-sizing: border-box; }
  .pastecol .btxt { margin-top: 3px; }
  .pastecol .caret { margin-top: 7px; }
  .stack { display: flex; flex-direction: column; margin-left: -1px; }
  .sitem { height: 23px; display: flex; align-items: center; white-space: nowrap; }
  .sico { width: 19px; display: flex; justify-content: flex-start; }
  .copycaret { margin-left: 10px; display: flex; }

  .fontg { padding: 8px 0 0 4px; box-sizing: border-box; }
  .frow1 { display: grid; grid-template-columns: 111px 43px 22px 22px; height: 23px; }
  .combo {
    box-sizing: border-box;
    border: 1px solid #c6c6c6;
    background: #fff;
    display: flex;
    align-items: center;
    justify-content: space-between;
    padding: 0 6px 0 3px;
    font-size: 11.5px;
    color: #333;
  }
  .fsize { border-left-width: 0; margin-left: 0; }
  .frow2 {
    margin-top: 7px;
    display: grid;
    grid-template-columns: 21px 22px 22px 13px 10px 20px 12px 12px 20px 12px 22px 10px;
    height: 23px;
  }
  .frow2 > * { display: flex; align-items: center; justify-content: center; }
  .ch { font-family: "Liberation Sans", sans-serif; color: #555; display: flex; align-items: center; justify-content: center; font-size: 14px; }
  .bold { font-weight: 700; }
  .ital { font-family: "Liberation Serif", serif; font-weight: 700; font-style: italic; }
  .vsep { width: 1px; height: 21px; background: #d4d4d4; justify-self: center; align-self: center; display: block !important; }
  .fcolor { display: flex; flex-direction: column; align-items: center; width: 16px; }
  .fcolor b { font-family: "Liberation Sans", sans-serif; font-size: 15px; line-height: 13px; font-weight: 400; color: #555; -webkit-text-stroke: .4px #555; }
  .fcolor i { display: block; width: 16px; height: 4px; background: #ff0000; }
  .growa { position: relative; font-family: "Liberation Sans", sans-serif; font-size: 16px; color: #555; display: inline-flex; line-height: 16px; }
  .growa.small { font-size: 13px; }
  .growa svg { margin-left: -1px; margin-top: 0; }

  .aligng { display: flex; padding: 8px 0 0 4px; box-sizing: border-box; }
  .agrid { display: grid; grid-template-columns: 22px 22px 22px 9px 22px 22px; grid-template-rows: 23px 23px; row-gap: 8px; }
  .agrid .top { padding-bottom: 7px; }
  .agrid .cc:nth-child(2) { padding-top: 1px; }
  .tile { background: #c6c6c6; padding-top: 8px; }
  .orient { grid-column: span 2; display: flex; align-items: center; gap: 4px; padding-left: 3px; }
  .bigsep { width: 1px; height: 54px; background: #d4d4d4; margin-left: 4px; }
  .wrapcol { display: flex; flex-direction: column; gap: 8px; padding-left: 7px; }
  .wrow { height: 23px; display: flex; align-items: center; gap: 2px; white-space: nowrap; }
  .mtext { margin-right: 11px; }

  .numg { padding: 8px 0 0 4px; box-sizing: border-box; }
  .gen { width: 131px; height: 23px; padding-left: 3px; }
  .nrow { margin-top: 7px; display: grid; grid-template-columns: 24px 8px 26px 16px 16px 16px 6px 16px; height: 23px; }
  .dollar { font-family: "Liberation Sans", sans-serif; font-size: 17px; color: #555; }
  .pct { font-family: "Noto Sans", sans-serif; font-size: 15px; color: #555; }
  .comma { font-family: "Liberation Sans", sans-serif; font-weight: 700; font-size: 15px; color: #555; padding-bottom: 7px; box-sizing: border-box; }
  .md { font-size: 15px; }

  .stylesg { display: flex; }
  .big { display: flex; flex-direction: column; align-items: center; flex: none; }
  .bico { height: 38px; display: flex; align-items: center; justify-content: center; flex: none; }
  .b-cf { width: 78px; }
  .b-ft { width: 52px; }
  .w42 { width: 42px; }
  .w43 { width: 43px; }
  .big > .caret { margin-top: 7px; }
  .big .btxt > .caret { margin-left: 1px; border-top-color: #6a6a6a; }
  .gallery { margin: 3px 0 0 4px; width: 546px; height: 63px; box-sizing: border-box; border: 1px solid #c6c6c6; background: #fff; display: flex; }
  .sgrid { display: grid; grid-template-columns: repeat(5, 100px); grid-template-rows: 22px 22px; gap: 6px; padding: 5px 0 0 2px; width: 531px; box-sizing: border-box; }
  .st { display: flex; align-items: center; padding: 0 0 2px 4px; box-sizing: border-box; font-size: 12px; white-space: nowrap; }
  .normal { color: #000; outline: 3px solid #c6c6c6; outline-offset: 0; padding-left: 3px; }
  .bad { background: #ffc7ce; color: #9c0006; }
  .good { background: #c6efce; color: #006100; }
  .neutral { background: #ffeb9c; color: #9c6500; }
  .calc { background: #f2f2f2; color: #fa7d00; border: 1px solid #7f7f7f; font-weight: 700; }
  .check { background: #a5a5a5; color: #fff; font-weight: 700; border: 3px double #3f3f3f; padding: 0 0 0 1px; }
  .expl { color: #7f7f7f; font-style: italic; }
  .input { background: #ffcc99; color: #3f3f76; border: 1px solid #7f7f7f; }
  .linked { color: #fa7d00; border-bottom: 3px double #ff8001; }
  .note { background: #ffffcc; color: #000; border: 1px solid #b2b2b2; }
  .gscroll { width: 14px; border-left: 1px solid #c6c6c6; display: flex; flex-direction: column; margin-left: auto; }
  .gb { flex: 1; display: flex; flex-direction: column; gap: 2px; align-items: center; justify-content: center; border-bottom: 1px solid #c6c6c6; background: #fff; }
  .gb.disabled { background: #e9e9e9; }
  .gb:last-child { border-bottom: 0; }
  .gb.disabled .upc { border-bottom-color: #bbb; }
  .gb em { display: block; width: 7px; height: 1px; background: #6a6a6a; }
  .upc, .dnc, .lc, .rc { display: block; width: 0; height: 0; }
  .upc { border-left: 4px solid transparent; border-right: 4px solid transparent; border-bottom: 4px solid #6a6a6a; }
  .dnc { border-left: 4px solid transparent; border-right: 4px solid transparent; border-top: 4px solid #6a6a6a; }
  .lc { border-top: 4px solid transparent; border-bottom: 4px solid transparent; border-right: 4px solid #bbb; }
  .rc { border-top: 4px solid transparent; border-bottom: 4px solid transparent; border-left: 4px solid #bbb; }

  .cellsg { display: flex; padding-left: 4px; box-sizing: border-box; }
  .editg { display: flex; padding-left: 7px; box-sizing: border-box; }
  .estack { width: 89px; flex: none; }
  .estack .sitem { position: relative; }
  .ascaret { margin-left: 12px; display: flex; }
  .mini { display: inline-flex; margin-left: 4px; }
  .collapse { flex: 1; display: flex; align-items: flex-end; justify-content: flex-end; padding: 0 11px 4px 0; }

  /* formula bar */
  .fbar { height: 47px; flex: none; background: #e6e6e6; display: flex; padding-top: 11px; box-sizing: border-box; align-items: flex-start; }
  .namebox { width: 102px; height: 26px; margin-left: 5px; box-sizing: border-box; border: 1px solid #c6c6c6; background: #fff; display: flex; align-items: center; justify-content: space-between; padding: 0 6px 0 6px; font-size: 12.5px; color: #333; }
  .nbcaret { border-left: 4px solid transparent; border-right: 4px solid transparent; border-top: 4px solid #6a6a6a; }
  .grip { width: 3px; height: 11px; margin: 7px 15px 0 13px; background-image: radial-gradient(#9a9a9a 1px, transparent 1px); background-size: 3px 4px; }
  .fxbox { width: 110px; height: 26px; box-sizing: border-box; border: 1px solid #c6c6c6; background: #fff; display: grid; grid-template-columns: 38px 34px 36px; align-items: center; justify-items: center; }
  .fx { font-family: "Liberation Serif", serif; font-style: italic; font-size: 14px; font-weight: 700; color: #555; }
  .finput { width: 1665px; height: 26px; margin-left: 3px; box-sizing: border-box; border: 1px solid #c6c6c6; background: #fff; display: flex; align-items: center; justify-content: flex-end; padding-right: 3px; }
  .fcaret { width: 5px; height: 5px; border-right: 1.500px solid #6a6a6a; border-bottom: 1.500px solid #6a6a6a; transform: rotate(45deg) translate(-2px,-2px); }

  /* sheet */
  .sheet { height: 786px; flex: none; display: flex; }
  .gridpane { width: 1898px; flex: none; display: flex; flex-direction: column; border-bottom: 1px solid #8a8a8a; box-sizing: border-box; overflow: hidden; }
  .colhead { display: flex; height: 16px; flex: none; border-bottom: 3px solid #217346; box-sizing: content-box; font-family: "Liberation Sans", sans-serif; margin-bottom: -3px; position: relative; z-index: 1; margin-top: -1px; }
  .corner { width: 26px; height: 16px; flex: none; background: #e6e6e6; display: flex; align-items: flex-end; justify-content: flex-end; padding: 0 3px 2px 0; box-sizing: border-box; }
  .ch-cell { width: 64px; flex: none; height: 16px; line-height: 18px; box-sizing: border-box; background: #cfcfcf; border-right: 1px solid #aeaeae; text-align: center; font-size: 13.3px; color: #1f6d44; }
  .ch-cell.stub { width: 16px; border-right: 0; }
  .gridrows { flex: 1; overflow: hidden; background: #fff; padding-top: 2px; }
  .grow { display: flex; height: 17px; box-sizing: border-box; font-family: "Liberation Sans", sans-serif; font-size: 13.33px; color: #000; }
  .grow.sel { background: #c6c6c6; color: #111; }
  .rh { width: 26px; flex: none; height: 17px; line-height: 17px; box-sizing: border-box; background: #e6e6e6; border-right: 1px solid #b0b0b0; border-bottom: 1px solid #b0b0b0; text-align: center; font-size: 13.33px; color: #444; }
  .rh.rsel { background: #d3f0e0; color: #1f6d44; border-right: 2px solid #217346; border-bottom-color: #b9d9c7; }
  .rh.active { background: #9fd5b7; }
  .cell { width: 64px; flex: none; height: 17px; box-sizing: border-box; border-right: 1px solid #d4d4d4; border-bottom: 1px solid #d4d4d4; line-height: 16px; padding: 0 3px 0 2px; white-space: nowrap; }
  .sel .cell { border-color: #a9a9a9; }
  .e14 .cell { border-bottom: 1px solid #c9c9c9; }
  .sel.e14 .cell { border-bottom: 1px solid #e8e8e8; }
  .sel.e25 .cell { border-bottom: 1px solid #f2f2f2; }
  .cell.stub { width: 16px; border-right: 0; }
  .cell.num { text-align: right; }
  .cell.clip { overflow: hidden; padding-right: 0; }
  .cell.spill { border-right-color: transparent !important; }
  .vs { flex: 1; display: flex; flex-direction: column; align-items: center; background: #e6e6e6; padding: 3px 3px 0 1px; box-sizing: border-box; }
  .sbtn { width: 15px; height: 14px; background: #fff; border: 1px solid #c6c6c6; box-sizing: border-box; display: flex; align-items: center; justify-content: center; flex: none; }
  .vtrack { flex: 1; width: 15px; }
  .vthumb { height: 424px; margin-top: 1px; background: #fff; border: 1px solid #c6c6c6; box-sizing: border-box; }

  /* tab bar */
  .tabbar { height: 28px; flex: none; background: #e6e6e6; display: flex; align-items: flex-start; border-bottom: 1px solid #d4d4d4; box-sizing: border-box; position: relative; }
  .nav { width: 29px; height: 26px; display: flex; align-items: center; justify-content: center; }
  .nav:first-child { margin-left: 15px; }
  .tsep { width: 1px; height: 24px; background: #b5b5b5; margin: 1px 0 0 27px; }
  .stab { width: 58px; height: 25px; display: flex; align-items: center; justify-content: center; font-size: 11.5px; color: #444; }
  .stab.cur { width: 65px; background: #fff; color: #217346; font-weight: 700; border-bottom: 2px solid #217346; box-sizing: content-box; height: 23px; }
  .addsheet { margin: 4px 0 0 32px; }
  .dots { width: 2px; height: 9px; margin: 9px 0 0 878px; background-image: radial-gradient(#8a8a8a 1px, transparent 1px); background-size: 2px 3px; }
  .hs { display: flex; margin: 7px 0 0 16px; height: 15px; width: 729px; }
  .hbtn { width: 14px; height: 15px; background: #fff; border: 1px solid #c6c6c6; box-sizing: border-box; display: flex; align-items: center; justify-content: center; flex: none; }
  .hbtn .rc, .hbtn .lc { border-left-color: #6a6a6a; border-right-color: #6a6a6a; }
  .hthumb { width: 676px; background: #fff; border: 1px solid #c6c6c6; box-sizing: border-box; }
  .htrack { width: 25px; background: #d8d8d8; }

  /* status */
  .status { height: 22px; flex: none; background: #f1f1f1; display: flex; align-items: center; font-size: 10.8px; color: #555; }
  .msg { margin-left: 7px; width: 1386px; flex: none; padding-bottom: 2px; }
  .stat { flex: none; padding-bottom: 2px; }
  .s-a { width: 96px; }
  .s-c { width: 66px; }
  .s-s { width: 73px; }
  .vw { width: 38px; height: 22px; display: flex; align-items: center; justify-content: center; flex: none; }
  .vw.on { background: #c6c6c6; }
  .zminus { width: 6px; height: 2px; background: #555; margin-left: 3px; }
  .slider { width: 100px; height: 1px; background: #8a8a8a; margin-left: 5px; position: relative; }
  .knob { position: absolute; left: 49px; top: -6px; width: 3px; height: 13px; background: #555; }
  .zplus { margin-left: 4px; }
  .pcent { margin-left: 16px; padding-bottom: 2px; }

  /* blur */
  .blurpatch { position: absolute; left: 142px; top: 363px; width: 274px; height: 74px; overflow: hidden; }
  .b1 { position: absolute; left: 0; top: 0; width: 252px; height: 74px; background: #c3c3c3; }
  .b2 { position: absolute; left: 40px; top: 18px; width: 60px; height: 34px; background: #b0b0b0; filter: blur(10px); }
  .b3 { position: absolute; left: 12px; top: 60px; width: 240px; height: 14px; background: #adadad; filter: blur(4px); }
  .b4 { position: absolute; left: 250px; top: 60px; width: 24px; height: 14px; background: #bdbdbd; }

  /* context menu */
  .ctx { position: absolute; left: 21px; top: 523px; width: 207px; height: 299px; box-sizing: border-box; background: #fff; border: 1px solid #c6c6c6; box-shadow: 1px 1px 3px rgba(0,0,0,.18); font-size: 11.3px; color: #505050; }
  .mi { display: flex; align-items: center; height: 24px; position: relative; box-sizing: border-box; padding-bottom: 3px; }
  .mico { width: 26px; margin-right: 6px; flex: none; display: flex; justify-content: center; }
  .mi u { text-underline-offset: 2px; }
  .mhead { display: flex; align-items: center; height: 22px; position: relative; }
  .mhead b { background: #e9e9e9; flex: 1; height: 22px; line-height: 20px; margin: 0 1px 0 -8px; padding-left: 8px; color: #555; font-weight: 600; }
  .pastes { display: grid; grid-template-columns: repeat(6, 30px); height: 30px; padding: 3px 0 0 30px; box-sizing: border-box; }
  .msep { height: 1px; background: #e0e0e0; margin: 0 2px 1px 32px; }
  .submenu { position: absolute; left: 181px; top: 3px; height: 18px; width: 18px; border-left: 1px solid #e0e0e0; display: flex; align-items: center; justify-content: center; padding-left: 5px; box-sizing: border-box; }
  .submenu .rc { border-left-color: #555; }
  .hotrow { background: #c6c6c6; margin-right: 1px; color: #444; }
  .redring { position: absolute; left: 22px; top: -1px; width: 59px; height: 24px; box-sizing: border-box; border: 2px solid #e8232a; border-radius: 5px; box-shadow: 0 1px 3px rgba(0,0,0,.35); }

  /* mini toolbar */
  .minibar { position: absolute; left: 21px; top: 838px; width: 261px; height: 54px; box-sizing: border-box; background: #fff; border: 1px solid #c6c6c6; box-shadow: 1px 1px 2px rgba(0,0,0,.15); padding: 3px 0 0 2px; }
  .m1 { display: grid; grid-template-columns: 63px 47px 24px 22px 18px 14px 22px 20px 24px; height: 23px; font-size: 11.5px; }
  .mcombo { box-sizing: border-box; border: 1px solid #c6c6c6; display: flex; align-items: center; justify-content: space-between; padding: 0 5px 0 3px; color: #444; }
  .m2 { display: grid; grid-template-columns: 20px 24px 22px 24px 8px 26px 8px 24px 10px 24px 20px 26px; height: 24px; }
  .m2 .cc { font-size: 14px; }
</style>
